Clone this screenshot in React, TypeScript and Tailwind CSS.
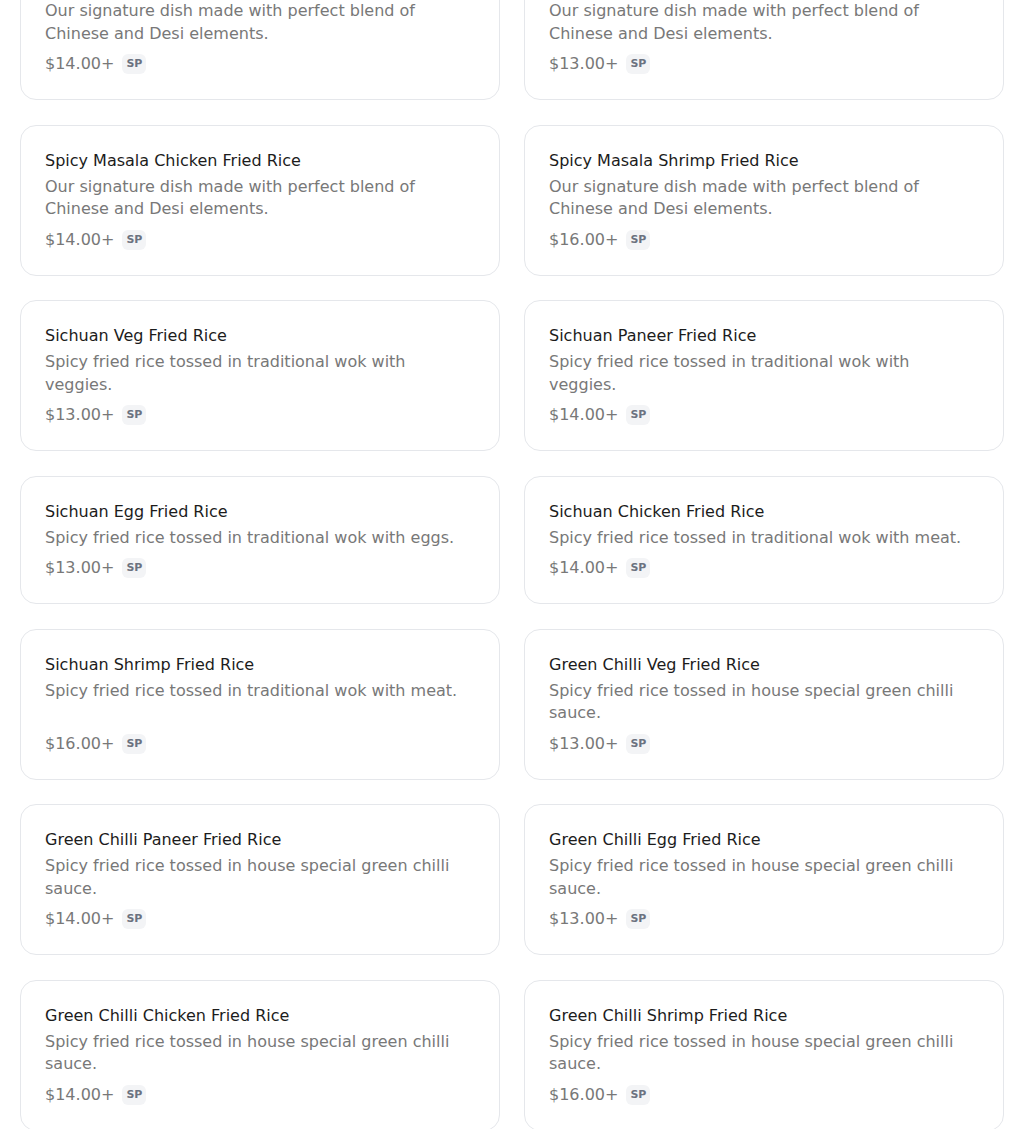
import React from "react";

type Item = { name: string; desc: string; price: string };

const SIG = "Our signature dish made with perfect blend of Chinese and Desi elements.";
const SICH = "Spicy fried rice tossed in traditional wok with";
const GC = "Spicy fried rice tossed in house special green chilli sauce.";

const items: Item[] = [
  { name: "Spicy Masala Paneer Fried Rice", desc: SIG, price: "$14.00+" },
  { name: "Spicy Masala Egg Fried Rice", desc: SIG, price: "$13.00+" },
  { name: "Spicy Masala Chicken Fried Rice", desc: SIG, price: "$14.00+" },
  { name: "Spicy Masala Shrimp Fried Rice", desc: SIG, price: "$16.00+" },
  { name: "Sichuan Veg Fried Rice", desc: SICH + " veggies.", price: "$13.00+" },
  { name: "Sichuan Paneer Fried Rice", desc: SICH + " veggies.", price: "$14.00+" },
  { name: "Sichuan Egg Fried Rice", desc: SICH + " eggs.", price: "$13.00+" },
  { name: "Sichuan Chicken Fried Rice", desc: SICH + " meat.", price: "$14.00+" },
  { name: "Sichuan Shrimp Fried Rice", desc: SICH + " meat.", price: "$16.00+" },
  { name: "Green Chilli Veg Fried Rice", desc: GC, price: "$13.00+" },
  { name: "Green Chilli Paneer Fried Rice", desc: GC, price: "$14.00+" },
  { name: "Green Chilli Egg Fried Rice", desc: GC, price: "$13.00+" },
  { name: "Green Chilli Chicken Fried Rice", desc: GC, price: "$14.00+" },
  { name: "Green Chilli Shrimp Fried Rice", desc: GC, price: "$16.00+" },
];

function Card({ item }: { item: Item }) {
  return (
    <div className="flex flex-col rounded-2xl border border-[#e5e7eb] bg-white px-6 pt-[25px] pb-[23px]">
      <div className="text-base leading-5 text-[#1c1c1c]">{item.name}</div>
      <div className="mt-[5px] text-base leading-[22.5px] text-[#787878]">{item.desc}</div>
      <div className="mt-auto flex items-center pt-[7px]">
        <span className="text-base leading-6 text-[#787878]">{item.price}</span>
        <span className="ml-2 rounded-md bg-[#f3f4f6] px-1 py-[3px] text-[11px] font-bold leading-[14px] text-[#6b7280]">
          SP
        </span>
      </div>
    </div>
  );
}

export default function App() {
  return (
    <div className="h-[1129px] overflow-hidden bg-white font-['DejaVu_Sans',sans-serif]">
      <div className="-mt-[51px] grid grid-cols-2 gap-x-6 gap-y-[24.5px] px-5">
        {items.map((it) => (
          <Card key={it.name} item={it} />
        ))}
      </div>
    </div>
  );
}
